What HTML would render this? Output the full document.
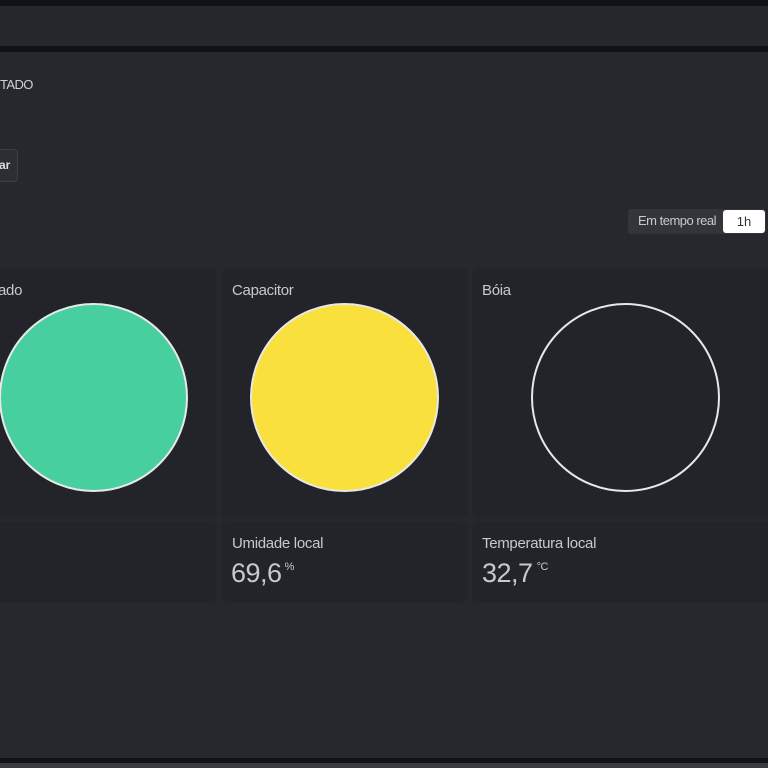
<!DOCTYPE html><html><head><style>
*{margin:0;padding:0;box-sizing:border-box}
body{width:768px;height:768px;overflow:hidden;background:#27282d;font-family:"Liberation Sans",sans-serif;position:relative}
.a{position:absolute}
.card{position:absolute;background:#232429;border-radius:3px;box-shadow:0 0 3px rgba(0,0,0,.25)}
.t{position:absolute;color:#c8c9cc;font-size:15px;letter-spacing:-0.3px}
</style></head><body>
<div class="a" style="left:0;top:0;width:768px;height:6px;background:#111217"></div>
<div class="a" style="left:0;top:6px;width:768px;height:40px;background:#26272c"></div>
<div class="a" style="left:0;top:46px;width:768px;height:6px;background:#111217"></div>
<div class="a" style="left:0;top:77px;color:#cfd0d3;font-size:13px;letter-spacing:-0.6px">TADO</div>
<div class="a" style="left:-10px;top:149px;width:28px;height:33px;border:1px solid #3d3e44;border-radius:4px;background:#2d2e34;color:#ddd;font-size:12px;font-weight:bold;line-height:31px;padding-left:8px">ar</div>
<div class="a" style="left:628px;top:209px;width:138px;height:25px;background:#34353b;border-radius:3px"></div>
<div class="a" style="left:638px;top:213px;color:#c8c9cc;font-size:13px;letter-spacing:-0.5px">Em tempo real</div>
<div class="a" style="left:723px;top:210px;width:42px;height:23px;background:#fff;border-radius:3px;color:#333;font-size:13px;text-align:center;line-height:23px">1h</div>
<div class="card" style="left:-5px;top:270px;width:220px;height:246px"></div>
<div class="card" style="left:223px;top:270px;width:243px;height:246px"></div>
<div class="card" style="left:474px;top:270px;width:300px;height:246px"></div>
<div class="t" style="left:-2px;top:282px">ado</div>
<div class="t" style="left:232px;top:282px">Capacitor</div>
<div class="t" style="left:482px;top:282px">Bóia</div>
<div class="a" style="left:-1px;top:303px;width:189px;height:189px;border-radius:50%;background:#48cfa0;border:2px solid #e8e8e8"></div>
<div class="a" style="left:250px;top:303px;width:189px;height:189px;border-radius:50%;background:#fae03c;border:2px solid #e8e8e8"></div>
<div class="a" style="left:531px;top:303px;width:189px;height:189px;border-radius:50%;border:2px solid #e8e8e8"></div>
<div class="card" style="left:-5px;top:523px;width:220px;height:78px"></div>
<div class="card" style="left:223px;top:523px;width:243px;height:78px"></div>
<div class="card" style="left:474px;top:523px;width:300px;height:78px"></div>
<div class="t" style="left:232px;top:535px">Umidade local</div>
<div class="t" style="left:482px;top:535px">Temperatura local</div>
<div class="a" style="left:231px;top:558px;color:#c8c9cc;font-size:27px;letter-spacing:-0.5px">69,6<span style="font-size:11px;vertical-align:12px;margin-left:3px">%</span></div>
<div class="a" style="left:482px;top:558px;color:#c8c9cc;font-size:27px;letter-spacing:-0.5px">32,7<span style="font-size:11px;vertical-align:12px;margin-left:4px">°C</span></div>
<div class="a" style="left:0;top:758px;width:768px;height:5px;background:#111217"></div>
<div class="a" style="left:0;top:763px;width:768px;height:5px;background:#3a3b40"></div>
</body></html>
